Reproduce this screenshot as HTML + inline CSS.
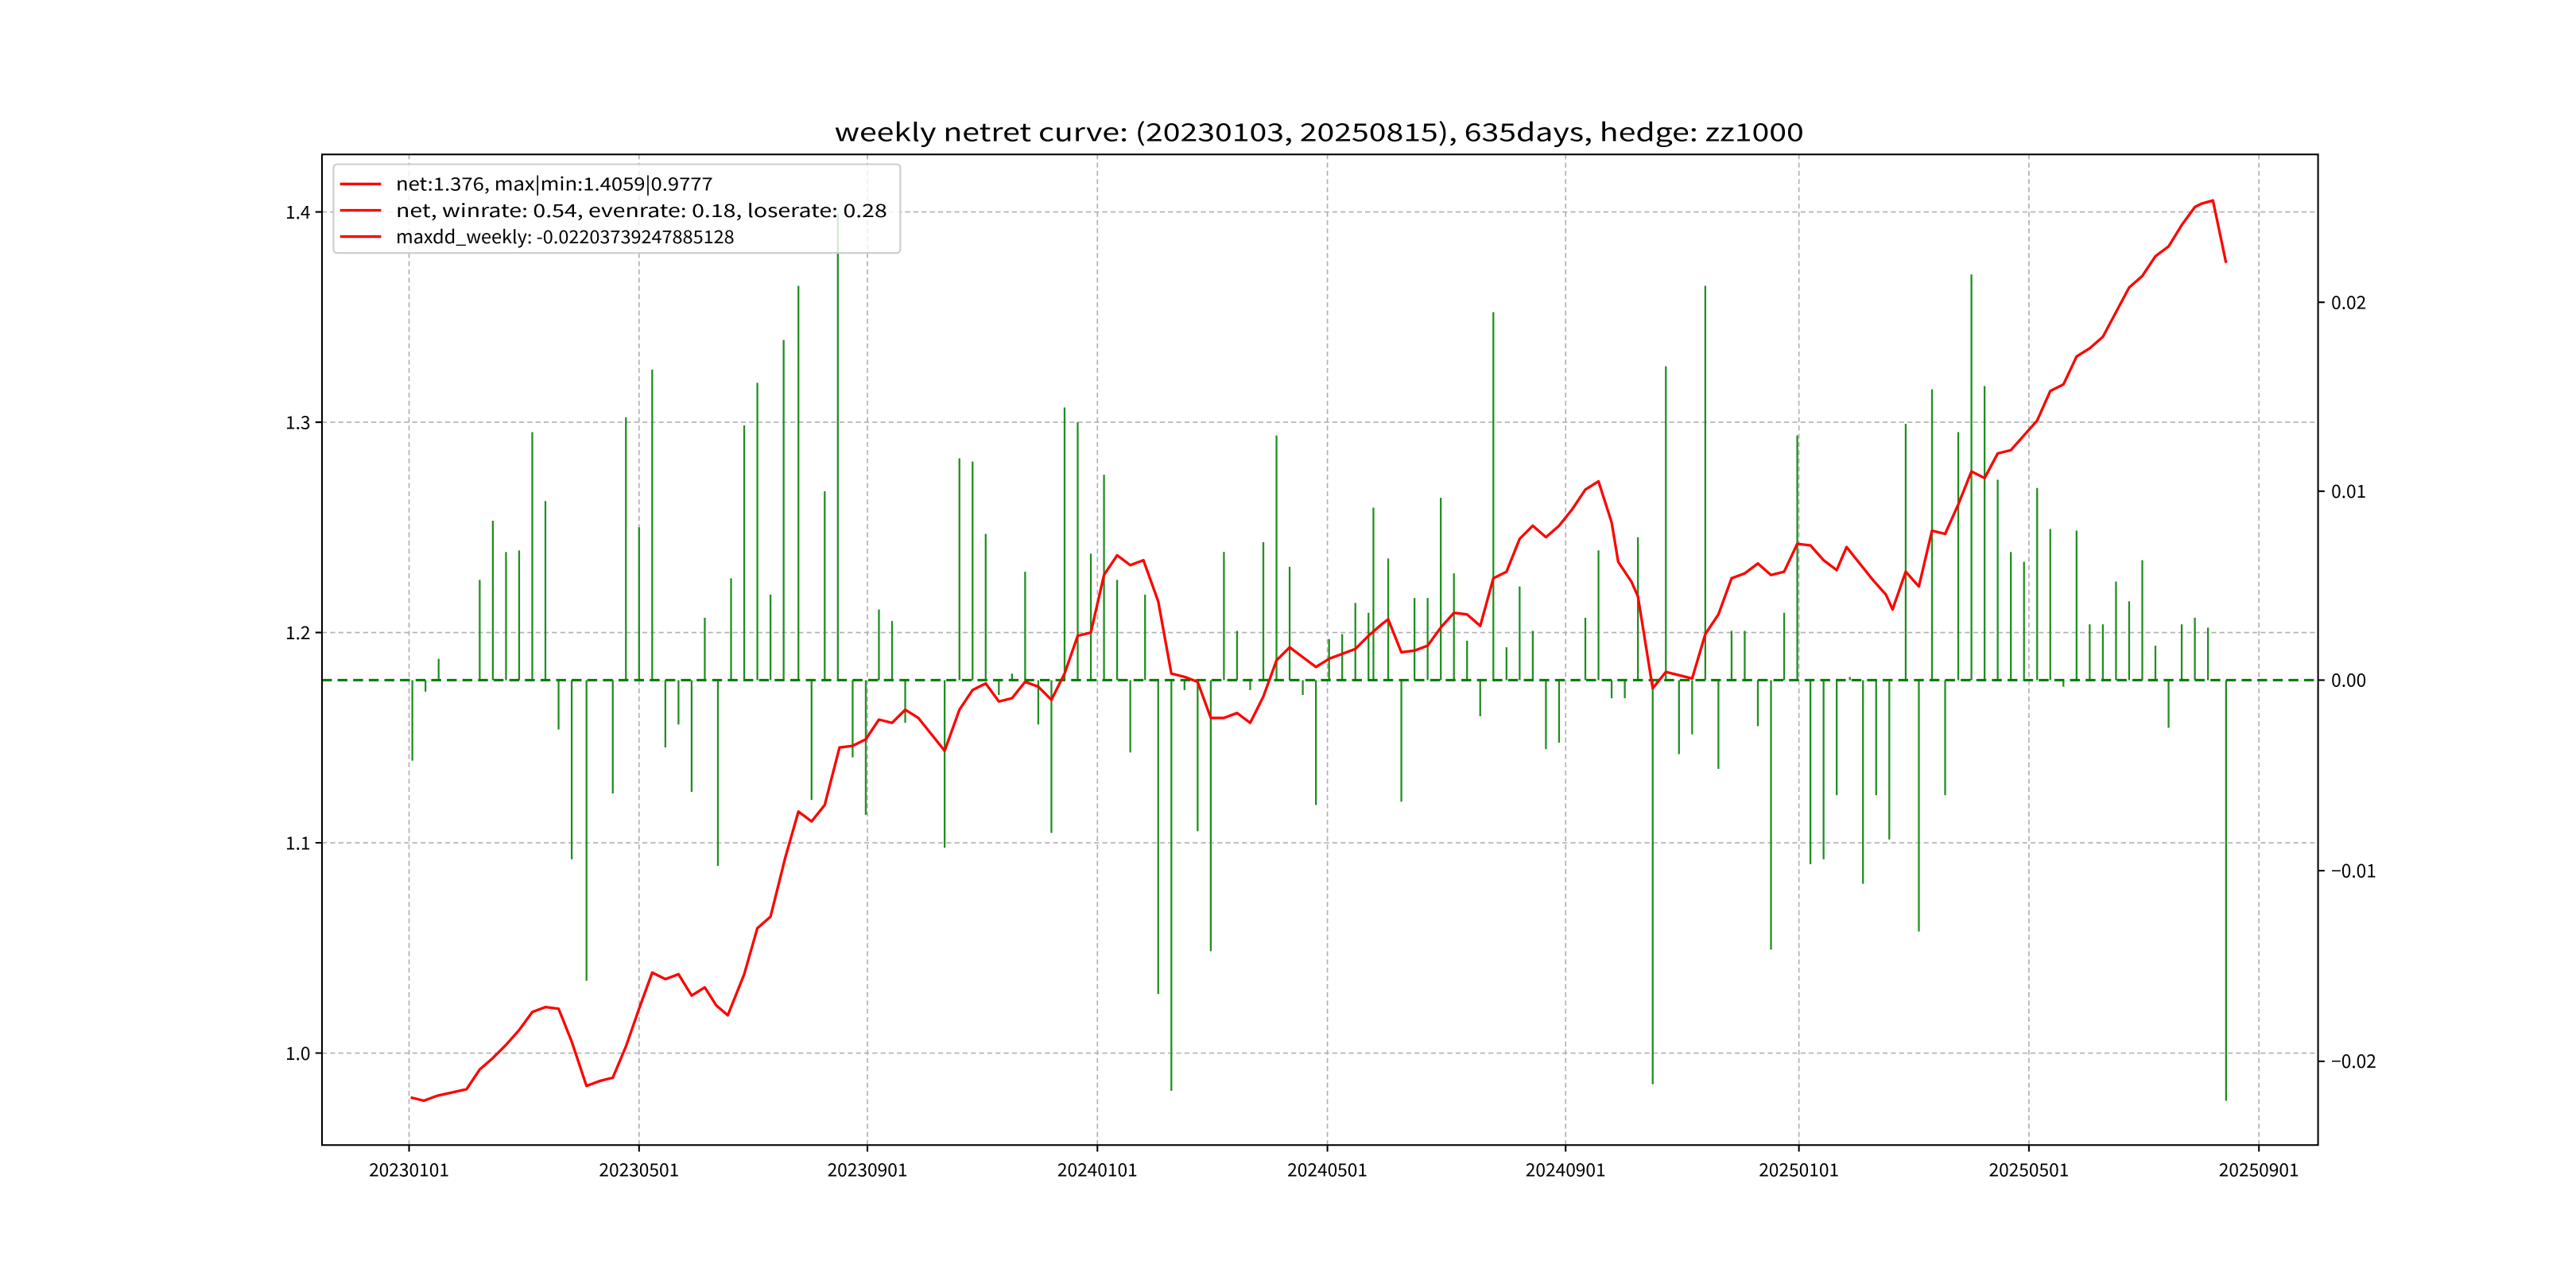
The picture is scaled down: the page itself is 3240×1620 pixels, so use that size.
<!DOCTYPE html>
<html><head><meta charset="utf-8"><style>
html,body{margin:0;padding:0;background:#fff;}
svg{display:block;}
text{font-family:"Noto Sans CJK SC","WenQuanYi Zen Hei","Liberation Sans",sans-serif;fill:#000;}
</style></head><body>
<svg width="3240" height="1620" viewBox="0 0 1568 784" xmlns="http://www.w3.org/2000/svg">
<rect width="1568" height="784" fill="#fff"/>
<text x="803" y="86" font-size="15" text-anchor="middle" textLength="590" lengthAdjust="spacingAndGlyphs">weekly netret curve: (20230103, 20250815), 635days, hedge: zz1000</text>
<g stroke="#b0b0b0" stroke-width="0.8" stroke-dasharray="3,2" fill="none">
<path d="M196 129H1411M196 257H1411M196 385H1411M196 513H1411M196 641H1411"/>
<path d="M249 94V697M389 94V697M528 94V697M668 94V697M808 94V697M953 94V697M1095 94V697M1235 94V697M1375 94V697"/>
</g>
<g stroke="#1f8f1f" stroke-width="1.1" fill="none">
<path d="M251 414V463M259 414V421M267 414V401M292 414V353M300 414V317M308 414V336M316 414V335M324 414V263M332 414V305M340 414V444M348 414V523M357 414V597M373 414V483M381 414V254M389 414V321M397 414V225M405 414V455M413 414V441M421 414V482M429 414V376M437 414V527M445 414V352M453 414V259M461 414V233M469 414V362M477 414V207M486 414V174M494 414V487M502 414V299M510 414V130M519 414V461M527 414V496M535 414V371M543 414V378M551 414V440M575 414V516M584 414V279M592 414V281M600 414V325M608 414V423M616 414V410M624 414V348M632 414V441M640 414V507M648 414V248M656 414V257M664 414V337M672 414V289M680 414V353M688 414V458M697 414V362M705 414V605M713 414V664M721 414V420M729 414V506M737 414V579M745 414V336M753 414V384M761 414V420M769 414V330M777 414V265M785 414V345M793 414V423M801 414V490M809 414V389M817 414V386M825 414V367M833 414V373M836 414V309M845 414V340M853 414V488M861 414V364M869 414V364M877 414V303M885 414V349M893 414V390M901 414V436M909 414V190M917 414V394M925 414V357M933 414V384M941 414V456M949 414V452M965 414V376M973 414V335M981 414V425M989 414V425M997 414V327M1006 414V660M1014 414V223M1022 414V459M1030 414V447M1038 414V174M1046 414V468M1054 414V384M1062 414V384M1070 414V442M1078 414V578M1086 414V373M1094 414V265M1102 414V526M1110 414V523M1118 414V484M1126 414V412M1134 414V538M1142 414V484M1150 414V511M1160 414V258M1168 414V567M1176 414V237M1184 414V484M1192 414V263M1200 414V167M1208 414V235M1216 414V292M1224 414V336M1232 414V342M1240 414V297M1248 414V322M1256 414V418M1264 414V323M1272 414V380M1280 414V380M1288 414V354M1296 414V366M1304 414V341M1312 414V393M1320 414V443M1328 414V380M1336 414V376M1344 414V382M1355 414V670"/>
</g>
<path d="M196 414H1411" stroke="#008000" stroke-width="1.5" stroke-dasharray="6,3.5"/>
<polyline fill="none" stroke="#ff0000" stroke-width="1.6" stroke-linejoin="round" points="250,668 258,670 266,667 275,665 284,663 292,651 300,644 308,636 316,627 324,616 332,613 340,614 348,634 357,661 365,658 373,656 381,637 389,614 397,592 405,596 413,593 421,606 429,601 436,612 443,618 453,593 461,565 469,558 478,522 486,494 494,500 502,490 511,455 519,454 527,450 535,438 543,440 551,432 559,437 567,447 575,457 584,432 592,420 600,416 608,427 616,425 624,415 632,418 640,426 648,410 656,387 664,385 672,350 680,338 688,344 696,341 705,366 713,410 721,412 729,415 737,437 745,437 753,434 761,440 769,424 777,402 785,394 793,400 801,406 809,401 817,398 825,395 833,387 841,380 845,377 853,397 861,396 869,393 877,382 885,373 893,374 901,381 909,352 917,348 925,328 933,320 941,327 949,320 957,310 965,298 973,293 981,318 985,342 993,354 997,363 1006,419 1014,409 1022,411 1030,413 1038,386 1046,374 1054,352 1062,349 1070,343 1078,350 1086,348 1094,331 1102,332 1110,341 1118,347 1124,333 1132,343 1140,353 1148,362 1152,371 1160,348 1168,357 1176,323 1184,325 1192,307 1200,287 1208,291 1216,276 1224,274 1232,265 1240,256 1248,238 1256,234 1264,217 1272,212 1280,205 1288,190 1296,175 1304,168 1312,156 1320,150 1328,137 1336,126 1340,124 1347,122 1355,160"/>
<rect x="196" y="94" width="1215" height="603" fill="none" stroke="#000" stroke-width="1"/>
<g stroke="#000" stroke-width="1">
<path d="M192 129H196M192 257H196M192 385H196M192 513H196M192 641H196"/>
<path d="M1411 184H1415M1411 299H1415M1411 414H1415M1411 530H1415M1411 646H1415"/>
<path d="M249 697V701M389 697V701M528 697V701M668 697V701M808 697V701M953 697V701M1095 697V701M1235 697V701M1375 697V701"/>
</g>
<g font-size="11" text-anchor="end">
<text x="189" y="133">1.4</text><text x="189" y="261">1.3</text><text x="189" y="389">1.2</text><text x="189" y="517">1.1</text><text x="189" y="645">1.0</text>
</g>
<g font-size="11">
<text x="1419" y="188">0.02</text><text x="1419" y="303">0.01</text><text x="1419" y="418">0.00</text><text x="1419" y="534">−0.01</text><text x="1419" y="650">−0.02</text>
</g>
<g font-size="11" text-anchor="middle">
<text x="249" y="716">20230101</text><text x="389" y="716">20230501</text><text x="528" y="716">20230901</text><text x="668" y="716">20240101</text><text x="808" y="716">20240501</text><text x="953" y="716">20240901</text><text x="1095" y="716">20250101</text><text x="1235" y="716">20250501</text><text x="1375" y="716">20250901</text>
</g>
<rect x="203" y="100" width="345" height="54" rx="2" fill="#fff" fill-opacity="0.8" stroke="#cccccc" stroke-width="1"/>
<g stroke="#ff0000" stroke-width="1.6">
<path d="M207 112H232M207 128H232M207 144H232"/>
</g>
<g font-size="11">
<text x="241" y="116" textLength="193" lengthAdjust="spacingAndGlyphs">net:1.376, max|min:1.4059|0.9777</text>
<text x="241" y="132" textLength="299" lengthAdjust="spacingAndGlyphs">net, winrate: 0.54, evenrate: 0.18, loserate: 0.28</text>
<text x="241" y="148" textLength="206" lengthAdjust="spacingAndGlyphs">maxdd_weekly: -0.02203739247885128</text>
</g>
</svg>
</body></html>
